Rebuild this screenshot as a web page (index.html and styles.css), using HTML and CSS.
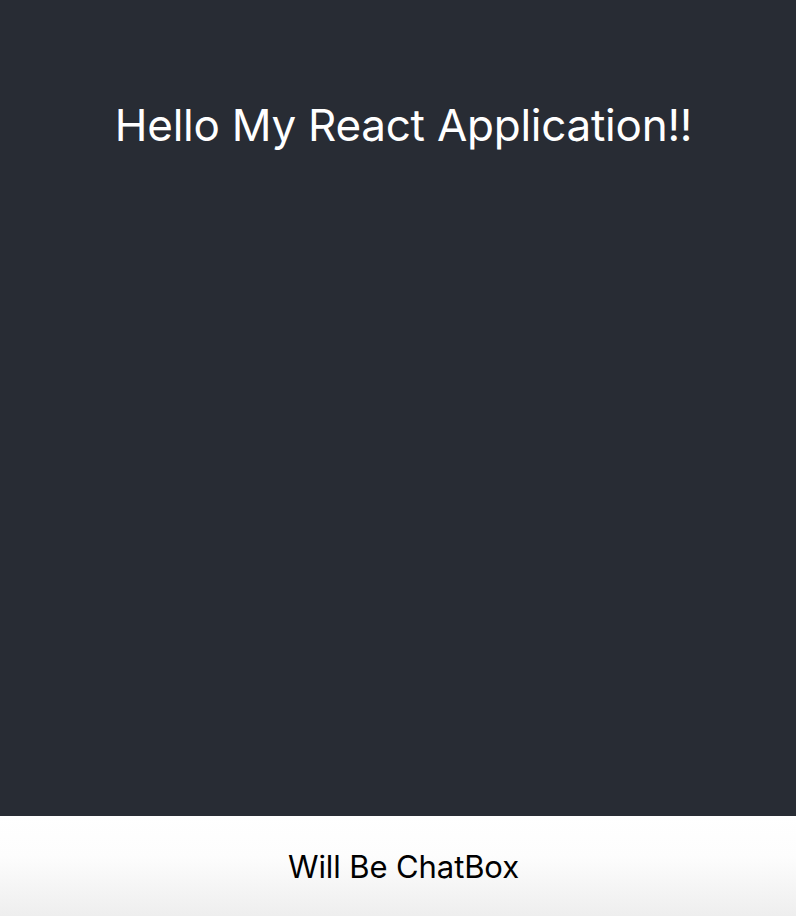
FILE: index.html
```html
<!DOCTYPE html>
<html>
<head>
<meta charset="utf-8">
<link rel="stylesheet" href="styles.css">
</head>
<body>
<div class="app">
  <header class="app-header">
    <h1 class="title">Hello My React Application!!</h1>
  </header>
  <footer class="chatbox">
    <span class="chat-text">Will Be ChatBox</span>
  </footer>
</div>
</body>
</html>
```
FILE: styles.css
```css
html, body {
  margin: 0;
  padding: 0;
}
body {
  font-family: Inter, Roboto, "Liberation Sans", sans-serif;
}
.app {
  display: flex;
  flex-direction: column;
  height: 916px;
}
.app-header {
  background: #282c34;
  height: 816px;
  display: flex;
  justify-content: center;
  align-items: flex-start;
  padding-left: 11px;
}
.title {
  margin: 0;
  padding-top: 98px;
  font-size: 44px;
  line-height: 54px;
  font-weight: 400;
  color: #ffffff;
  letter-spacing: -0.25px;
}
.chatbox {
  height: 100px;
  display: flex;
  align-items: center;
  justify-content: center;
  padding-left: 11px;
  background: linear-gradient(to bottom, #ffffff 0%, #fdfdfd 40%, #eeeeee 100%);
}
.chat-text {
  font-size: 31px;
  color: #000000;
  letter-spacing: -0.1px;
}
```
